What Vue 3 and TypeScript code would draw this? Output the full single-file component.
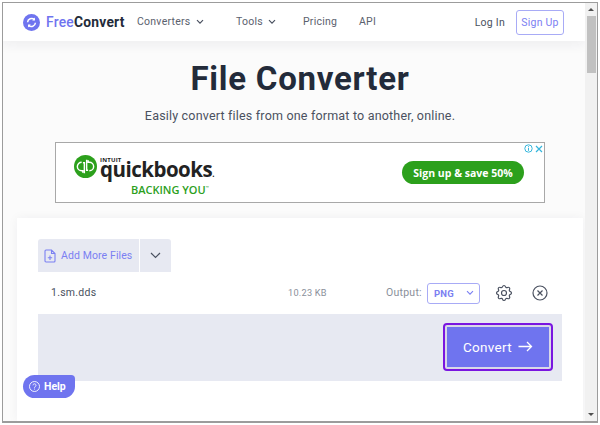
<script setup lang="ts">
const navItems: { label: string; caret: boolean }[] = [
  { label: 'Converters', caret: true },
  { label: 'Tools', caret: true },
  { label: 'Pricing', caret: false },
  { label: 'API', caret: false },
]
</script>

<template>
  <div class="frame">
    <div class="viewport">
      <div class="page">
        <header class="header">
          <div class="brand">
            <svg class="logo" width="17" height="17" viewBox="0 0 17 17">
              <circle cx="8.5" cy="8.5" r="8.5" fill="#6f74ef" />
              <path d="M4.6 8.2a4 4 0 0 1 6.8-2.6M12.4 8.8a4 4 0 0 1-6.8 2.6" fill="none" stroke="#fff" stroke-width="1.5" />
              <path d="M12 3.6v2.8H9.2zM5 13.4v-2.8h2.8z" fill="#fff" />
            </svg>
            <span class="brand-name"><span class="brand-free">Free</span>Convert</span>
          </div>
          <nav class="nav">
            <span v-for="item in navItems" :key="item.label" class="nav-item" :class="'nav-' + item.label.toLowerCase()">
              {{ item.label }}
              <svg v-if="item.caret" width="8" height="6" viewBox="0 0 8 6"><path d="M1 1.2l3 3 3-3" fill="none" stroke="#4a5160" stroke-width="1.2" /></svg>
            </span>
          </nav>
          <div class="auth">
            <span class="login">Log In</span>
            <span class="signup">Sign Up</span>
          </div>
        </header>

        <section class="hero">
          <h1 class="title">File Converter</h1>
          <p class="subtitle">Easily convert files from one format to another, online.</p>
        </section>

        <div class="ad">
          <div class="ad-marks">
            <svg width="9" height="9" viewBox="0 0 9 9"><circle cx="4.5" cy="4.5" r="3.7" fill="none" stroke="#35b6dc" stroke-width="1" /><path d="M4.5 2.2v1M4.5 3.9v2.9" stroke="#35b6dc" stroke-width="1" /></svg>
            <svg width="8" height="8" viewBox="0 0 8 8"><path d="M1 1l6 6M7 1L1 7" stroke="#35b6dc" stroke-width="1.2" /></svg>
          </div>
          <div class="qb">
            <svg class="qb-mark" width="23" height="23" viewBox="0 0 24 24">
              <circle cx="12" cy="12" r="12" fill="#2ca01c" />
              <path d="M8 7.5a4.5 4.5 0 0 0 0 9h1.2V18.5M16 16.500a4.500 4.500 0 0 0 0-9h-1.200V5.500M10.800 19V8h-1.500M13.200 5v11h1.500" fill="none" stroke="#fff" stroke-width="1.500" />
            </svg>
            <div class="qb-text">
              <span class="qb-intuit">INTUIT</span>
              <span class="qb-name">quickbooks<small>.</small></span>
              <span class="qb-tag">BACKING YOU<sup>™</sup></span>
            </div>
          </div>
          <span class="ad-cta">Sign up &amp; save 50%</span>
        </div>

        <section class="card">
          <div class="tabs">
            <div class="tab-add">
              <svg width="12" height="14" viewBox="0 0 12 14"><path d="M1 2a1 1 0 0 1 1-1h5.500L11 4.500V12a1 1 0 0 1-1 1H2a1 1 0 0 1-1-1zM7.500 1v3.500H11M6 6.500v4.500M3.800 8.800h4.400" fill="none" stroke="#7b80f2" stroke-width="1.100" /></svg>
              <span class="tab-label">Add More Files</span>
            </div>
            <div class="tab-more">
              <svg width="11" height="7" viewBox="0 0 11 7"><path d="M1 1l4.500 4.500L10 1" fill="none" stroke="#4a5160" stroke-width="1.200" /></svg>
            </div>
          </div>
          <div class="file-row">
            <span class="file-name">1.sm.dds</span>
            <span class="file-size">10.23 KB</span>
            <span class="output-label">Output:</span>
            <span class="select">
              <span>PNG</span>
              <svg width="8" height="6" viewBox="0 0 8 6"><path d="M1 1.200l3 3 3-3" fill="none" stroke="#7b80f2" stroke-width="1.100" /></svg>
            </span>
            <svg class="gear" width="20" height="20" viewBox="0 0 24 24" fill="none" stroke="#4a5160" stroke-width="1.400" stroke-linejoin="round">
              <path d="M10.325 4.317c.426-1.756 2.924-1.756 3.35 0a1.724 1.724 0 002.573 1.066c1.543-.94 3.31.826 2.37 2.37a1.724 1.724 0 001.065 2.572c1.756.426 1.756 2.924 0 3.35a1.724 1.724 0 00-1.066 2.573c.94 1.543-.826 3.31-2.37 2.37a1.724 1.724 0 00-2.572 1.065c-.426 1.756-2.924 1.756-3.35 0a1.724 1.724 0 00-2.573-1.066c-1.543.94-3.31-.826-2.37-2.37a1.724 1.724 0 00-1.065-2.572c-1.756-.426-1.756-2.924 0-3.35a1.724 1.724 0 001.066-2.573c-.94-1.543.826-3.31 2.37-2.37.996.608 2.296.07 2.572-1.065z" />
              <circle cx="12" cy="12" r="3" />
            </svg>
            <svg class="close" width="16" height="16" viewBox="0 0 16 16" fill="none" stroke="#4a5160" stroke-width="1.200">
              <circle cx="8" cy="8" r="7" />
              <path d="M5.500 5.500l5 5M10.500 5.500l-5 5" />
            </svg>
          </div>
          <div class="action-row">
            <button class="convert" type="button">
              Convert
              <svg width="15" height="11" viewBox="0 0 15 11"><path d="M0.500 5.500h13M9 1l4.500 4.500L9 10" fill="none" stroke="#fff" stroke-width="1.300" /></svg>
            </button>
          </div>
        </section>
      </div>

      <div class="scrollbar">
        <span class="arrow arrow-up"></span>
        <span class="thumb"></span>
        <span class="track"></span>
        <span class="arrow arrow-down"></span>
      </div>

      <div class="help">
        <svg width="11" height="11" viewBox="0 0 11 11" fill="none" stroke="#fff" stroke-width=".9"><circle cx="5.500" cy="5.500" r="5" /><path d="M4 4.300a1.500 1.500 0 1 1 2.300 1.300c-.6.400-.8.700-.8 1.200M5.500 7.600v.9" /></svg>
        <span>Help</span>
      </div>
    </div>
  </div>
</template>

<style>
html, body { margin: 0; background: #fff; }
</style>

<style scoped>
.frame {
  width: 600px;
  height: 425px;
  box-sizing: border-box;
  padding: 2px;
  background: #fff;
  font-family: Inter, "Liberation Sans", sans-serif;
  color: #4a5160;
  overflow: hidden;
}
.viewport {
  position: relative;
  display: flex;
  height: 100%;
  box-sizing: border-box;
  border: 1px solid #9c9c9c;
  border-bottom-width: 2px;
  overflow: hidden;
}
.page {
  flex: 1;
  min-width: 0;
  display: flex;
  flex-direction: column;
  background: #fbfbfb;
}
.header {
  height: 38px;
  flex: none;
  display: flex;
  align-items: center;
  padding-left: 20px;
  background: #fff;
  box-shadow: 0 4px 12px rgba(40, 40, 60, .06);
}
.brand { display: flex; align-items: center; gap: 6px; width: 114px; flex: none; }
.logo { flex: none; }
.brand-name { font-size: 13.800px; font-weight: 700; color: #232b3a; letter-spacing: .25px; font-family: Roboto, sans-serif; }
.brand-free { color: #6f74ef; font-weight: 500; }
.nav { display: flex; align-items: center; font-size: 10.500px; font-family: Roboto, sans-serif; letter-spacing: .25px; color: #5b616e; margin-top: -1px; }
.nav-item { display: inline-flex; align-items: center; gap: 5px; white-space: nowrap; }
.nav-converters { width: 99px; }
.nav-tools { width: 67px; }
.nav-pricing { width: 56px; }
.auth { margin-left: auto; display: flex; align-items: center; margin-right: 21px; font-family: Roboto, sans-serif; font-size: 10.500px; letter-spacing: .25px; }
.login { margin-right: 11px; color: #4a5160; }
.signup { color: #7b80f2; border: 1px solid #a8abf6; border-radius: 3px; height: 25px; width: 48px; display: flex; align-items: center; justify-content: center; box-sizing: border-box; }

.hero { display: flex; flex-direction: column; align-items: center; padding: 20px 0 0 12px; }
.title { margin: 0; font-size: 33px; line-height: 36px; font-weight: 700; color: #232b3a; letter-spacing: .75px; font-family: Roboto, sans-serif; }
.subtitle { margin: 11px 0 0; font-size: 12.500px; line-height: 16px; letter-spacing: .19px; color: #4a5160; font-family: Roboto, sans-serif; }

.ad {
  position: relative;
  flex: none;
  height: 61px;
  margin: 18px 0 0 52px;
  width: 490px;
  box-sizing: border-box;
  border: 1px solid #a8a8a8;
  background: #fff;
  display: flex;
  align-items: center;
  padding: 0 20px 0 18px;
  justify-content: space-between;
}
.ad-marks { position: absolute; top: 1px; right: 1px; display: flex; gap: 2px; align-items: center; }
.qb { display: flex; gap: 3px; align-items: flex-start; align-self: flex-start; margin-top: 12px; }
.qb-mark { flex: none; }
.qb-text { display: flex; flex-direction: column; margin-top: 2px; font-family: "Open Sans", sans-serif; }
.qb-intuit { font-size: 6px; line-height: 6px; font-weight: 700; color: #222; letter-spacing: .2px; }
.qb-name { font-size: 20.500px; line-height: 19px; font-weight: 700; color: #222; letter-spacing: -.5px; margin-top: -3.500px; }
.qb-name small { font-size: 8px; }
.qb-tag { font-size: 11px; line-height: 14px; font-weight: 600; color: #2ca01c; margin: .5px 0 0 31px; white-space: nowrap; }
.qb-tag sup { font-size: 4px; vertical-align: 5px; line-height: 0; }
.ad-cta {
  background: #2ca01c;
  color: #fff;
  font-family: "Open Sans", sans-serif;
  font-weight: 700;
  font-size: 10.500px;
  width: 122px;
  height: 23px;
  border-radius: 12px;
  display: flex;
  align-items: center;
  justify-content: center;
  white-space: nowrap;
}

.card {
  flex: 1;
  margin: 15px 2px 0 14px;
  padding: 21px 21px 0;
  background: #fff;
  box-shadow: 0 0 10px rgba(40, 40, 60, .05);
  display: flex;
  flex-direction: column;
}
.tabs { display: flex; height: 33px; flex: none; }
.tab-add {
  display: flex;
  align-items: center;
  gap: 5px;
  width: 101px;
  box-sizing: border-box;
  padding-left: 6px;
  background: #e7e9f2;
  border-radius: 3px 0 0 0;
  color: #7b80f2;
  font-size: 10.500px;
  font-family: Roboto, sans-serif;
  font-weight: 400;
  letter-spacing: .1px;
  white-space: nowrap;
}
.tab-label { margin-top: -1px; }
.tab-more {
  width: 31px;
  margin-left: 1px;
  background: #e7e9f2;
  border-radius: 0 3px 0 0;
  display: flex;
  align-items: center;
  justify-content: center;
}
.file-row {
  flex: none;
  height: 42px;
  display: flex;
  align-items: center;
  padding-left: 13px;
  background: #fff;
  font-family: Roboto, sans-serif;
  font-size: 10.500px;
  letter-spacing: .25px;
}
.file-name { color: #4a5160; width: 237px; margin-top: -1px; }
.file-size { color: #8a8f9a; font-size: 9.200px; width: 98px; margin-top: -1px; }
.output-label { color: #8a8f9a; width: 41px; margin-top: -1px; }
.select {
  width: 53px;
  height: 21px;
  box-sizing: border-box;
  border: 1px solid #a8abf6;
  border-radius: 3px;
  display: flex;
  align-items: center;
  justify-content: space-between;
  padding: 0 5px 0 6px;
  color: #7b80f2;
  font-weight: 700;
  font-size: 9.500px;
}
.gear { margin-left: 14px; }
.close { margin-left: 18px; }
.action-row {
  flex: none;
  height: 67px;
  box-sizing: border-box;
  padding: 0 11px 1px 0;
  background: #e7e9f2;
  display: flex;
  align-items: center;
  justify-content: flex-end;
}
.convert {
  width: 106px;
  height: 44px;
  box-sizing: border-box;
  padding: 0 0 1px;
  background: #6f74ef;
  border: 2px solid #d8d8e8;
  outline: 2px solid #7a16e0;
  border-radius: 2px;
  color: #fff;
  font-family: Roboto, sans-serif;
  font-size: 13.500px;
  font-weight: 400;
  letter-spacing: .3px;
  display: flex;
  align-items: center;
  justify-content: center;
  gap: 6px;
}

.scrollbar {
  flex: none;
  width: 12px;
  display: flex;
  flex-direction: column;
  align-items: center;
  background: #f1f1f1;
}
.arrow { flex: none; height: 13px; width: 12px; position: relative; display: block; }
.arrow::after { content: ""; position: absolute; left: 3px; border-left: 3px solid transparent; border-right: 3px solid transparent; }
.arrow-up::after { top: 5px; border-bottom: 3px solid #505050; }
.arrow-down::after { top: 5px; border-top: 3px solid #505050; }
.thumb { flex: none; width: 9px; height: 57px; background: #c1c1c1; }
.track { flex: 1; }

.help {
  position: absolute;
  left: 20px;
  top: 372px;
  width: 52px;
  height: 23px;
  box-sizing: border-box;
  padding-left: 6px;
  background: #6f74ef;
  border-radius: 12px 4px 12px 12px;
  display: flex;
  align-items: center;
  gap: 4px;
  color: #fff;
  font-family: Roboto, sans-serif;
  font-weight: 700;
  font-size: 10.500px;
}
</style>
